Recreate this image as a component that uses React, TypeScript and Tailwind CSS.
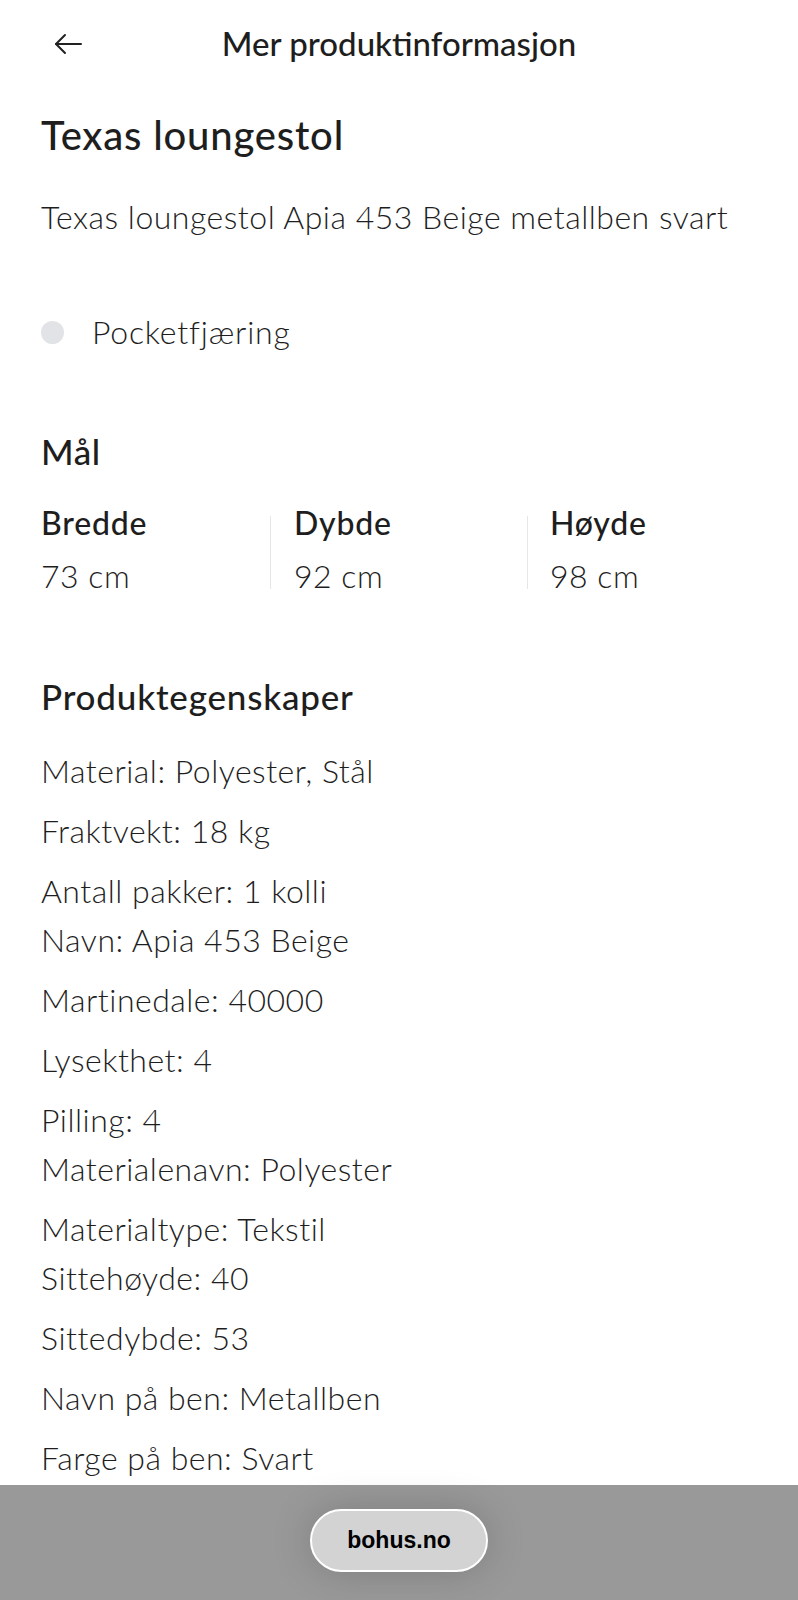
import React from 'react';

const groups: string[][] = [
  ['Material: Polyester, Stål'],
  ['Fraktvekt: 18 kg'],
  ['Antall pakker: 1 kolli', 'Navn: Apia 453 Beige'],
  ['Martinedale: 40000'],
  ['Lysekthet: 4'],
  ['Pilling: 4', 'Materialenavn: Polyester'],
  ['Materialtype: Tekstil', 'Sittehøyde: 40'],
  ['Sittedybde: 53'],
  ['Navn på ben: Metallben'],
  ['Farge på ben: Svart'],
];

const BackArrow = () => (
  <svg width="29" height="22" viewBox="0 0 29 22" fill="none" stroke="#222" strokeWidth="2" strokeLinecap="round" strokeLinejoin="round">
    <path d="M27 11H2" />
    <path d="M11 2 2 11l9 9" />
  </svg>
);

const App: React.FC = () => {
  return (
    <div className="relative min-h-[1600px] bg-white text-[#1e1e1e] font-['Lato','Noto_Sans',sans-serif]">
      {/* header */}
      <header className="grid h-[87px] grid-cols-[1fr_auto_1fr] items-center">
        <div className="pl-[54px]">
          <BackArrow />
        </div>
        <h2 className="text-[33px] leading-none font-medium">Mer produktinformasjon</h2>
        <div />
      </header>

      <main className="px-[41px] pb-[160px]">
        <h1 className="mt-[24px] text-[40px] leading-[48px] font-medium tracking-[0.8px]">Texas loungestol</h1>
        <p className="mt-[38px] text-[32px] leading-[40px] font-light tracking-[0.5px]">
          Texas loungestol Apia 453 Beige metallben svart
        </p>

        <div className="mt-[75px] flex items-center gap-[28px]">
          <span className="h-[23px] w-[23px] rounded-full bg-[#e2e3e6]" />
          <span className="text-[32px] leading-[40px] font-light tracking-[0.8px]">Pocketfjæring</span>
        </div>

        <h3 className="mt-[77px] text-[35px] leading-[44px] font-medium tracking-[0.6px]">Mål</h3>
        <div className="flex items-start">
          <div className="w-[229px]">
            <div className="mt-[30px] text-[32px] leading-[40px] font-medium tracking-[0.8px]">Bredde</div>
            <div className="mt-[13px] text-[32px] leading-[40px] font-light tracking-[0.5px]">73 cm</div>
          </div>
          <div className="mt-[43px] h-[73px] w-px bg-[#e6e6e6]" />
          <div className="w-[256px] pl-[23px]">
            <div className="mt-[30px] text-[32px] leading-[40px] font-medium tracking-[0.8px]">Dybde</div>
            <div className="mt-[13px] text-[32px] leading-[40px] font-light tracking-[0.5px]">92 cm</div>
          </div>
          <div className="mt-[43px] h-[73px] w-px bg-[#e6e6e6]" />
          <div className="pl-[22px]">
            <div className="mt-[30px] text-[32px] leading-[40px] font-medium tracking-[0.8px]">Høyde</div>
            <div className="mt-[13px] text-[32px] leading-[40px] font-light tracking-[0.5px]">98 cm</div>
          </div>
        </div>

        <h3 className="mt-[78px] text-[35px] leading-[44px] font-medium tracking-[0.8px]">Produktegenskaper</h3>
        <div className="mt-[28px] flex flex-col gap-[11px] text-[32px] leading-[49px] font-light tracking-[0.5px]">
          {groups.map((g, i) => (
            <p key={i}>
              {g.map((line, j) => (
                <React.Fragment key={j}>
                  {j > 0 && <br />}
                  {line}
                </React.Fragment>
              ))}
            </p>
          ))}
        </div>
      </main>

      {/* browser bottom bar */}
      <div className="fixed bottom-0 left-0 right-0 flex h-[115px] justify-center bg-[#999999] pt-[24px]">
        <div className="flex h-[63px] w-[178px] items-center justify-center rounded-full border-2 border-white bg-[#d3d3d3] shadow-[0_0_40px_rgba(0,0,0,0.18)]">
          <span className="font-['Liberation_Sans',Arial,sans-serif] text-[23px] font-bold text-black">bohus.no</span>
        </div>
      </div>
    </div>
  );
};

export default App;
